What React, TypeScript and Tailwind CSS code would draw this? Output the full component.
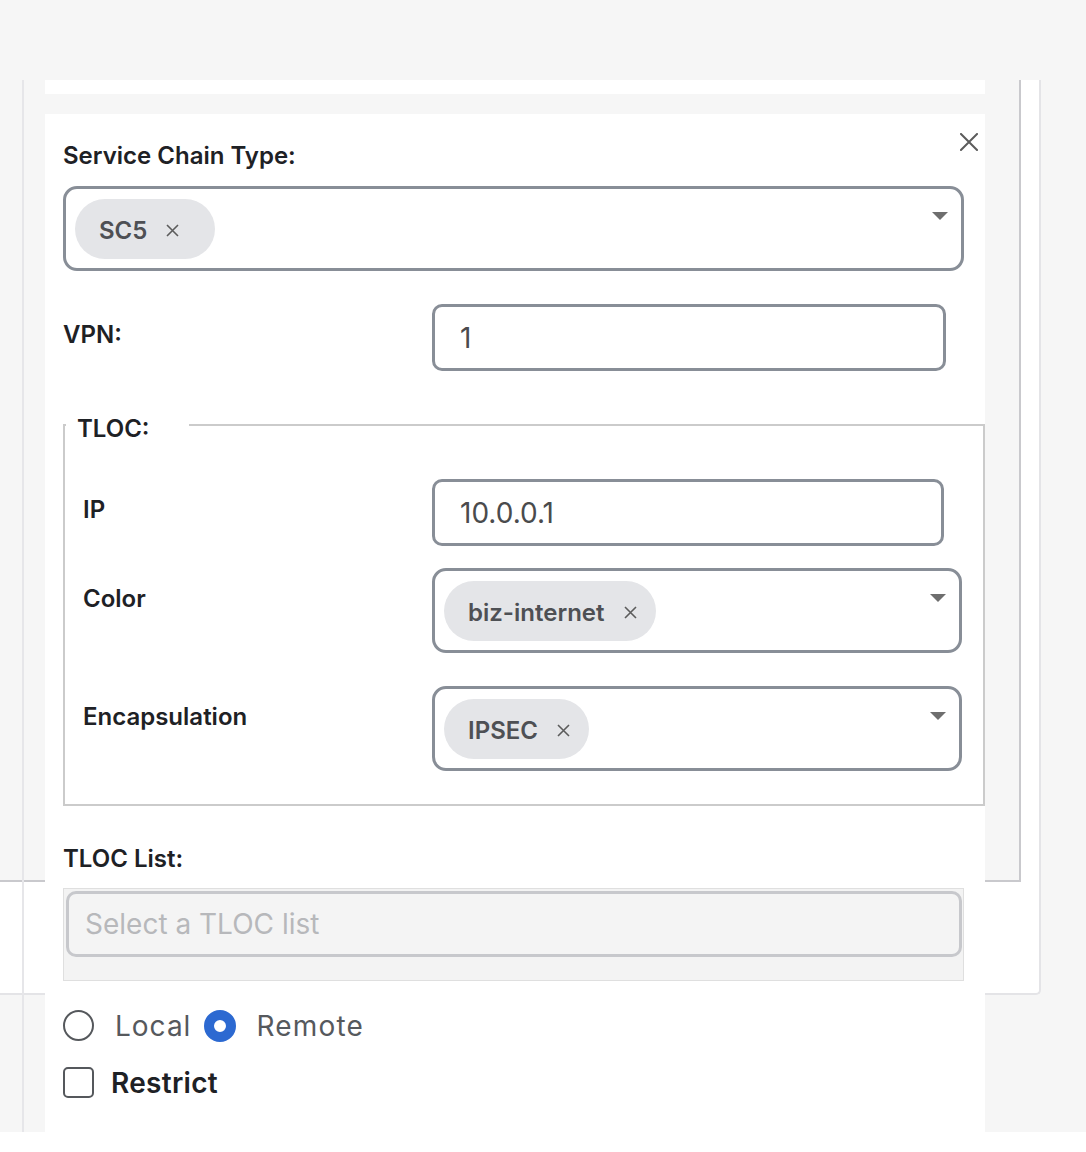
import React from "react";

function CloseIcon({ size = 18, stroke = 2 }: { size?: number; stroke?: number }) {
  return (
    <svg width={size} height={size} viewBox="0 0 18 18" fill="none">
      <path d="M1 1L17 17M17 1L1 17" stroke="currentColor" strokeWidth={stroke} strokeLinecap="square" />
    </svg>
  );
}

function Caret() {
  return (
    <svg width="16" height="8" viewBox="0 0 16 8" className="text-[#6e6e6e]">
      <path d="M0 0H16L8 8Z" fill="currentColor" />
    </svg>
  );
}

function Chip({ label, minW = "" }: { label: string; minW?: string }) {
  return (
    <div className={`h-[60px] rounded-full bg-[#e4e5e8] pl-[24px] pr-[19px] flex items-center gap-[19px] ${minW}`}>
      <span className="mt-[5px] text-[24px] font-semibold text-[#4e5054] leading-none">{label}</span>
      <span className="mt-[3px] text-[#5c5c5c]">
        <svg width="13" height="13" viewBox="0 0 13 13" fill="none">
          <path d="M1 1L12 12M12 1L1 12" stroke="currentColor" strokeWidth="1.6" />
        </svg>
      </span>
    </div>
  );
}

function MultiSelect({ label, width, minW }: { label: string; width: string; minW?: string }) {
  return (
    <div className={`${width} h-[85px] border-[3px] border-[#888e97] rounded-[14px] bg-white pl-[9px] pr-[13px] flex items-center`}>
      <div className="flex-1 flex">
        <Chip label={label} minW={minW} />
      </div>
      <div className="self-start mt-[23px]">
        <Caret />
      </div>
    </div>
  );
}

function TextBox({ value, width }: { value: string; width: string }) {
  return (
    <div className={`${width} h-[67px] border-[3px] border-[#888e97] rounded-[10px] bg-white px-[25px] flex items-center text-[28px] text-[#4a4b4d]`}>
      {value}
    </div>
  );
}

export default function App() {
  return (
    <div className="relative min-h-[1152px] bg-white font-['Inter','Noto_Sans',sans-serif] text-[#1e2125]">
      {/* backdrop: card + inner section */}
      <div className="h-[1132px] bg-[#f6f6f6] pt-[80px]">
        <div className="w-[1041px] h-[915px] bg-white border-r-2 border-b-2 border-[#e4e4e7] rounded-br-[5px]">
          <div className="w-[1021px] h-[802px] bg-[#f6f6f6] border-r-2 border-b-2 border-[#c9c9cd]" />
        </div>
      </div>
      <div className="absolute left-[22px] top-[80px] h-[1052px] w-[2px] bg-[#e6e6e9]" />

      {/* drawer panel */}
      <div className="absolute left-[45px] top-[80px] w-[940px]">
        <div className="h-[14px] bg-white" />
        <div className="relative mt-[20px] h-[1038px] bg-white pl-[18px] pt-[26px]">
          <button className="absolute top-[19px] right-[7px] text-[#5c5c5c]">
            <CloseIcon />
          </button>

          <div className="text-[24px] font-semibold leading-[32px]">Service Chain Type:</div>
          <div className="mt-[14px]">
            <MultiSelect label="SC5" width="w-[901px]" minW="min-w-[140px]" />
          </div>

          <div className="mt-[33px] flex items-start">
            <div className="w-[369px] mt-[15px] text-[24px] font-semibold leading-[32px]">VPN:</div>
            <TextBox value="1" width="w-[514px]" />
          </div>

          <fieldset className="mt-[38px] w-[922px] border-2 border-[#cbcbcb]">
            <legend className="ml-[1px] w-[123px] px-[11px] text-[24px] font-semibold leading-[32px]">
              <span className="relative top-[4px]">TLOC:</span>
            </legend>
            <div className="pl-[18px] pt-[38px] pb-[33px] flex flex-col">
              <div className="flex items-start">
                <div className="w-[349px] mt-[15px] text-[24px] font-semibold leading-[32px]">IP</div>
                <TextBox value="10.0.0.1" width="w-[512px]" />
              </div>
              <div className="mt-[22px] flex items-start">
                <div className="w-[349px] mt-[15px] text-[24px] font-semibold leading-[32px]">Color</div>
                <MultiSelect label="biz-internet" width="w-[530px]" />
              </div>
              <div className="mt-[33px] flex items-start">
                <div className="w-[349px] mt-[15px] text-[24px] font-semibold leading-[32px]">Encapsulation</div>
                <MultiSelect label="IPSEC" width="w-[530px]" />
              </div>
            </div>
          </fieldset>

          <div className="mt-[37px] text-[24px] font-semibold leading-[32px]">TLOC List:</div>
          <div className="mt-[13px] w-[901px] h-[93px] bg-[#f3f3f3] border border-[#dfdfdf] pt-[2px] pl-[2px] pr-[1px]">
            <div className="h-[66px] border-[3px] border-[#c7c8cc] rounded-[10px] bg-[#f4f4f4] px-[16px] flex items-center text-[28px] text-[#b7b8bb]">
              Select a TLOC list
            </div>
          </div>

          <div className="mt-[29px] flex items-center h-[31px] text-[28px] text-[#56595d]">
            <span className="w-[31px] h-[31px] rounded-full border-2 border-[#55585c] bg-white" />
            <span className="ml-[21px] tracking-[1px]">Local</span>
            <span className="ml-[13px] w-[32px] h-[32px] rounded-full border-[10px] border-[#2c69d1] bg-white" />
            <span className="ml-[20px] tracking-[1.2px]">Remote</span>
          </div>

          <div className="mt-[26px] flex items-center h-[31px]">
            <span className="w-[31px] h-[31px] rounded-[5px] border-2 border-[#55585c] bg-white" />
            <span className="ml-[17px] text-[28px] font-semibold tracking-[0.3px]">Restrict</span>
          </div>
        </div>
      </div>
    </div>
  );
}
